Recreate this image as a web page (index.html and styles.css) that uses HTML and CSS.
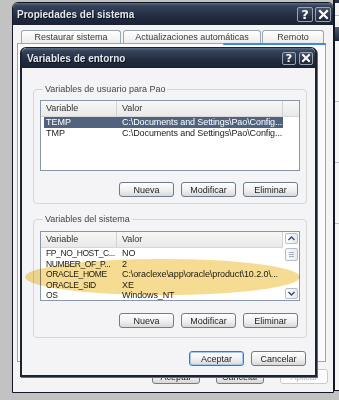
FILE: index.html
```html
<!DOCTYPE html>
<html lang="es">
<head>
  <meta charset="UTF-8">
  <meta name="viewport" content="width=device-width, initial-scale=1.0">
  <title>Variables de entorno</title>
  <link rel="stylesheet" href="styles.css">
</head>
<body>
  <div class="desktop">
    <!-- Window behind, only its left edge shows -->
    <div class="win back">
      <div class="back-caption"></div>
      <div class="back-tab"></div>
      <div class="back-title"></div>
      <div class="back-line"></div>
      <div class="back-line"></div>
      <div class="back-line"></div>
    </div>

    <!-- Propiedades del sistema -->
    <div class="win sys">
      <div class="titlebar">
        <span class="title">Propiedades del sistema</span>
        <div class="caption-buttons">
          <span class="cap-btn">?</span>
          <span class="cap-btn">
            <svg width="11" height="11" viewBox="0 0 11 11"><path d="M2 2 L9 9 M9 2 L2 9" stroke="#fff" stroke-width="2.2" stroke-linecap="square"/></svg>
          </span>
        </div>
      </div>
      <div class="tabs">
        <div class="tab tab-restore">Restaurar sistema</div>
        <div class="tab tab-updates">Actualizaciones automáticas</div>
        <div class="tab tab-remote">Remoto</div>
      </div>
      <div class="tab-panel"></div>
      <div class="sys-footer">
        <button class="btn">Aceptar</button>
        <button class="btn">Cancelar</button>
        <button class="btn" disabled>Aplicar</button>
      </div>
    </div>

    <!-- Variables de entorno -->
    <div class="win env">
      <div class="titlebar">
        <span class="title">Variables de entorno</span>
        <div class="caption-buttons">
          <span class="cap-btn">?</span>
          <span class="cap-btn">
            <svg width="10" height="10" viewBox="0 0 10 10"><path d="M2 2 L8 8 M8 2 L2 8" stroke="#fff" stroke-width="2" stroke-linecap="square"/></svg>
          </span>
        </div>
      </div>
      <div class="env-body">
        <!-- User variables -->
        <fieldset class="group user-group">
          <legend>Variables de usuario para Pao</legend>
          <div class="listview user-list">
            <div class="lv-main">
              <div class="lv-header">
                <span class="col-name">Variable</span>
                <span class="col-value">Valor</span>
              </div>
              <div class="lv-row selected">
                <span class="col-name">TEMP</span>
                <span class="col-value">C:\Documents and Settings\Pao\Config...</span>
              </div>
              <div class="lv-row">
                <span class="col-name">TMP</span>
                <span class="col-value">C:\Documents and Settings\Pao\Config...</span>
              </div>
            </div>
          </div>
          <div class="button-row">
            <button class="btn">Nueva</button>
            <button class="btn">Modificar</button>
            <button class="btn">Eliminar</button>
          </div>
        </fieldset>

        <!-- System variables -->
        <fieldset class="group system-group">
          <legend>Variables del sistema</legend>
          <div class="listview system-list">
            <div class="lv-main">
              <div class="lv-header">
                <span class="col-name">Variable</span>
                <span class="col-value">Valor</span>
              </div>
              <div class="lv-row">
                <span class="col-name">FP_NO_HOST_C...</span>
                <span class="col-value">NO</span>
              </div>
              <div class="lv-row">
                <span class="col-name">NUMBER_OF_P...</span>
                <span class="col-value">2</span>
              </div>
              <div class="lv-row">
                <span class="col-name">ORACLE_HOME</span>
                <span class="col-value">C:\oraclexe\app\oracle\product\10.2.0\...</span>
              </div>
              <div class="lv-row">
                <span class="col-name">ORACLE_SID</span>
                <span class="col-value">XE</span>
              </div>
              <div class="lv-row">
                <span class="col-name">OS</span>
                <span class="col-value">Windows_NT</span>
              </div>
            </div>
            <div class="scrollbar">
              <span class="sb-btn">
                <svg width="7" height="5" viewBox="0 0 7 5"><path d="M0.5 4 L3.5 1 L6.5 4" fill="none" stroke="#3a4a66" stroke-width="1.4"/></svg>
              </span>
              <span class="sb-thumb">
                <svg width="5" height="5" viewBox="0 0 5 5"><path d="M0 0.5 H5 M0 2.5 H5 M0 4.5 H5" stroke="#a4afc2" stroke-width="1"/></svg>
              </span>
              <span class="sb-btn down">
                <svg width="7" height="5" viewBox="0 0 7 5"><path d="M0.5 1 L3.5 4 L6.5 1" fill="none" stroke="#3a4a66" stroke-width="1.4"/></svg>
              </span>
            </div>
          </div>
          <div class="button-row">
            <button class="btn">Nueva</button>
            <button class="btn">Modificar</button>
            <button class="btn">Eliminar</button>
          </div>
        </fieldset>

        <div class="env-footer">
          <button class="btn default">Aceptar</button>
          <button class="btn">Cancelar</button>
        </div>
      </div>
    </div>

    <!-- yellow marker drawn over the screenshot -->
    <div class="highlight"></div>
  </div>
</body>
</html>
```

FILE: styles.css
```css
body {
  margin: 0;
  background: #c2c2c2;
  font-family: "Liberation Sans", Arial, sans-serif;
  font-size: 9px;
  color: #222;
}
.desktop {
  position: relative;
  width: 339px;
  height: 400px;
  overflow: hidden;
}
.win {
  position: absolute;
  box-sizing: border-box;
  display: flex;
  flex-direction: column;
}

/* title bars */
.titlebar {
  display: flex;
  align-items: center;
  justify-content: space-between;
  flex-shrink: 0;
  background: linear-gradient(#5c6b80 0, #34425a 3px, #222d40 60%, #1a2232 100%);
  border-radius: 5px 5px 0 0;
}
.title {
  color: #e4e8ee;
  font-weight: bold;
  font-size: 10px;
  text-shadow: 1px 1px 0 #0c111a;
}
.caption-buttons {
  display: flex;
  gap: 2px;
}
.cap-btn {
  box-sizing: border-box;
  display: flex;
  align-items: center;
  justify-content: center;
  border: 1px solid #9aa3b1;
  border-radius: 2px;
  background: linear-gradient(#46516a, #1d2535);
  color: #fff;
  font-weight: bold;
  font-family: "DejaVu Sans", sans-serif;
}

/* Propiedades del sistema */
.sys {
  left: 12px;
  top: 2px;
  width: 322px;
  height: 391px;
  border: 1px solid #131924;
  border-radius: 6px 6px 0 0;
  background: #f4f4f5;
}
.sys .titlebar {
  height: 22px;
  padding: 0 2px 0 4px;
}
.sys .cap-btn {
  width: 16px;
  height: 15px;
  font-size: 13px;
}
.tabs {
  display: flex;
  gap: 1px;
  margin-top: 5px;
  padding-left: 8px;
}
.tab {
  box-sizing: border-box;
  height: 13px;
  border: 1px solid #9aa6b2;
  border-bottom: none;
  border-radius: 3px 3px 0 0;
  background: linear-gradient(#ffffff, #ececea);
  color: #3a3a3a;
  text-align: center;
  line-height: 12px;
}
.tab-restore { width: 100px; margin-right: 1px; }
.tab-updates { width: 138px; }
.tab-remote { width: 62px; }
.tab-panel {
  position: relative;
  box-sizing: border-box;
  width: 309px;
  height: 319px;
  margin-left: 4px;
  border: 1px solid #9aa6b2;
  background: #fbfbfb;
}
.tab-panel::before {
  content: "";
  position: absolute;
  left: 205px;
  top: -1px;
  width: 103px;
  height: 2px;
  background: #3d8be0;
  border-radius: 2px 2px 0 0;
}
.sys-footer {
  display: flex;
  justify-content: flex-end;
  gap: 16px;
  margin-top: 7px;
  padding-right: 5px;
}
.sys-footer .btn {
  width: 48px;
}

/* buttons */
.btn {
  box-sizing: border-box;
  height: 15px;
  padding: 0;
  border: 1px solid #6e7b90;
  border-radius: 3px;
  background: linear-gradient(#ffffff, #eeeeee 60%, #d8d8d8);
  font-family: "Liberation Sans", Arial, sans-serif;
  font-size: 9px;
  color: #222;
}
.btn:disabled {
  border-color: #c9c9c9;
  background: #fdfdfd;
  color: #b4b4b4;
}
.btn.default {
  border-color: #3a78cf;
  box-shadow: inset 0 0 0 1px #a9c8f0;
}

/* Variables de entorno */
.env {
  left: 20px;
  top: 47px;
  width: 297px;
  height: 330px;
  border: 2px solid #1b2332;
  border-top-width: 1px;
  border-radius: 6px 6px 0 0;
  background: #f4f4f6;
  box-shadow: 1px 1px 0 #6b6b6b;
}
.env .titlebar {
  height: 20px;
  padding: 0 2px 0 5px;
}
.env .cap-btn {
  width: 14px;
  height: 13px;
  font-size: 11px;
}
.env .caption-buttons {
  gap: 3px;
}
.env-body {
  display: flex;
  flex-direction: column;
  padding: 0 8px 0 11px;
}
.group {
  margin: 0;
  padding: 0 6px;
  border: 1px solid #d6d6d2;
  border-radius: 4px;
}
.group legend {
  padding: 0 2px;
  margin-left: 3px;
  line-height: 11px;
  color: #444;
}
.user-group {
  margin-top: 16px;
  padding-top: 5px;
  padding-bottom: 6px;
}
.system-group {
  margin-top: 10px;
  padding-top: 6px;
  padding-bottom: 9px;
}

/* list views */
.listview {
  display: flex;
  box-sizing: border-box;
  border: 1px solid #8a96aa;
  background: #fff;
}
.user-list { height: 71px; }
.system-list { height: 70px; }
.lv-main {
  flex: 1;
  min-width: 0;
  overflow: hidden;
}
.lv-header {
  display: grid;
  grid-template-columns: 76px 166px 1fr;
  height: 15px;
  border-bottom: 1px solid #d8d8d8;
  background: linear-gradient(#f7f7f7, #e9e9e7);
  line-height: 15px;
  color: #333;
}
.lv-header span {
  padding-left: 5px;
  border-right: 1px solid #d2d2d2;
}
.lv-row {
  display: grid;
  grid-template-columns: 73px 166px;
  width: 239px;
  height: 11px;
  margin-left: 3px;
  line-height: 11px;
}
.system-list .lv-row {
  height: 10.5px;
  line-height: 10.5px;
}
.lv-row span {
  overflow: hidden;
  white-space: nowrap;
}
.lv-row .col-name { padding-left: 2px; }
.lv-row .col-value {
  padding-left: 5px;
  letter-spacing: -0.1px;
}
.system-list .lv-row .col-name {
  font-size: 8.5px;
  letter-spacing: -0.4px;
}
.user-list .lv-row:first-of-type { margin-top: 1px; }
.lv-row.selected {
  background: #51627f;
  color: #fff;
}

.scrollbar {
  display: flex;
  flex-direction: column;
  width: 13px;
  margin: 1px 1px 1px 2px;
}
.sb-btn,
.sb-thumb {
  box-sizing: border-box;
  display: flex;
  align-items: center;
  justify-content: center;
  border: 1px solid #b4bdcc;
  border-radius: 2px;
  background: linear-gradient(90deg, #fdfdfd, #e4e8ef);
}
.sb-btn { height: 11px; }
.sb-thumb {
  height: 13px;
  margin-top: 4px;
  background: linear-gradient(90deg, #fafafa, #e8ecf2);
}
.sb-btn.down { margin-top: auto; }

.button-row {
  display: flex;
  justify-content: flex-end;
  gap: 7px;
  margin-top: 11px;
  padding-right: 2px;
}
.button-row .btn { width: 55px; }
.system-group .button-row { margin-top: 12px; }

.env-footer {
  display: flex;
  justify-content: flex-end;
  gap: 7px;
  margin-top: 13px;
  padding-right: 1px;
}
.env-footer .btn { width: 55px; }

/* window behind on the right */
.back {
  left: 333px;
  top: -2px;
  width: 20px;
  height: 393px;
  border-left: 2px solid #131924;
  border-bottom: 1px solid #131924;
  background: #f6f6f6;
}
.back-caption {
  height: 5px;
  background: #2a3446;
}
.back-tab {
  height: 10px;
  margin-top: 12px;
  border-top: 1px solid #b9bfc8;
  background: linear-gradient(#fff, #ececea);
}
.back-title {
  height: 14px;
  margin-top: 1px;
  background: linear-gradient(#4d5b70, #1d2636);
}
.back-line {
  height: 1px;
  margin-top: 60px;
  background: #b9bfc8;
}

.highlight {
  position: absolute;
  left: 25px;
  top: 259px;
  width: 275px;
  height: 36px;
  border-radius: 50%;
  background: #f6dc92;
  mix-blend-mode: multiply;
}
```
